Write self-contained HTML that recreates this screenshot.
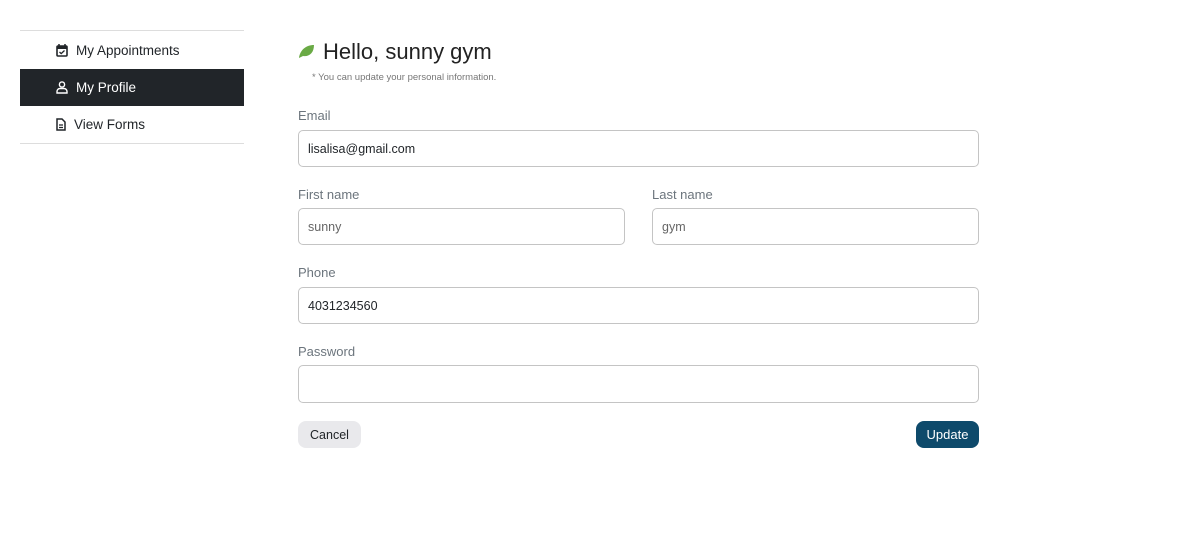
<!DOCTYPE html>
<html><head><style>
*{box-sizing:border-box;margin:0;padding:0}
body{width:1193px;height:537px;background:#fff;font-family:"Liberation Sans",sans-serif;position:relative;overflow:hidden;color:#212529}
.nav{position:absolute;left:20px;top:30px;width:224px;border-top:1px solid #ddd;border-bottom:1px solid #ddd}
.nav div{height:37px;display:flex;align-items:center;font-size:13.5px;padding-left:36px}
.nav div:first-child{height:38px}
.nav .act{background:#212529;color:#fff}
.nav svg{margin-right:8px}
.lbl{position:absolute;left:298px;font-size:13px;color:#6c757d}
.in{position:absolute;height:37px;border:1px solid #c4c4c4;border-radius:5px;font-size:12.5px;padding-left:9px;display:flex;align-items:center}
</style></head><body>
<div class="nav">
<div><svg width="12" height="13" viewBox="0 0 12 13"><rect x="1" y="2" width="10" height="10" rx="1" fill="none" stroke="#212529" stroke-width="1.6"/><rect x="1" y="2" width="10" height="3" fill="#212529"/><path d="M3 0v3M9 0v3" stroke="#212529" stroke-width="1.5"/><path d="M3.5 8l1.7 1.6L8.5 6.5" stroke="#212529" stroke-width="1.3" fill="none"/></svg>My Appointments</div>
<div class="act"><svg width="12" height="13" viewBox="0 0 12 13"><circle cx="6" cy="3.5" r="2.6" fill="none" stroke="#fff" stroke-width="1.4"/><path d="M1 12v-1.5a3 3 0 0 1 3-3h4a3 3 0 0 1 3 3V12z" fill="none" stroke="#fff" stroke-width="1.4"/></svg>My Profile</div>
<div><svg width="10" height="13" viewBox="0 0 10 13"><path d="M1 1h5l3 3v8H1z" fill="none" stroke="#212529" stroke-width="1.5"/><path d="M3 7h4M3 9.5h4" stroke="#212529" stroke-width="1.2"/></svg>View Forms</div>
</div>
<svg style="position:absolute;left:298px;top:44px" width="17" height="15" viewBox="0 0 17 15"><path d="M1 14C2 6 8 1 16 1c0 8-5 12-11 11z" fill="#6aaa45"/></svg>
<div style="position:absolute;left:323px;top:39px;font-size:22px;color:#222">Hello, sunny gym</div>
<div style="position:absolute;left:312px;top:72px;font-size:9.5px;color:#777">* You can update your personal information.</div>
<div class="lbl" style="top:108px">Email</div>
<div class="in" style="left:298px;top:130px;width:681px">lisalisa@gmail.com</div>
<div class="lbl" style="top:187px">First name</div>
<div class="lbl" style="top:187px;left:652px">Last name</div>
<div class="in" style="left:298px;top:208px;width:327px;color:#666">sunny</div>
<div class="in" style="left:652px;top:208px;width:327px;color:#666">gym</div>
<div class="lbl" style="top:265px">Phone</div>
<div class="in" style="left:298px;top:287px;width:681px">4031234560</div>
<div class="lbl" style="top:344px">Password</div>
<div class="in" style="left:298px;top:365px;width:681px;height:38px"></div>
<div style="position:absolute;left:298px;top:421px;width:63px;height:27px;background:#e9e9ec;border-radius:8px;font-size:12.5px;display:flex;align-items:center;justify-content:center">Cancel</div>
<div style="position:absolute;left:916px;top:421px;width:63px;height:27px;background:#0e4a6b;color:#fff;border-radius:8px;font-size:13px;display:flex;align-items:center;justify-content:center">Update</div>
</body></html>
